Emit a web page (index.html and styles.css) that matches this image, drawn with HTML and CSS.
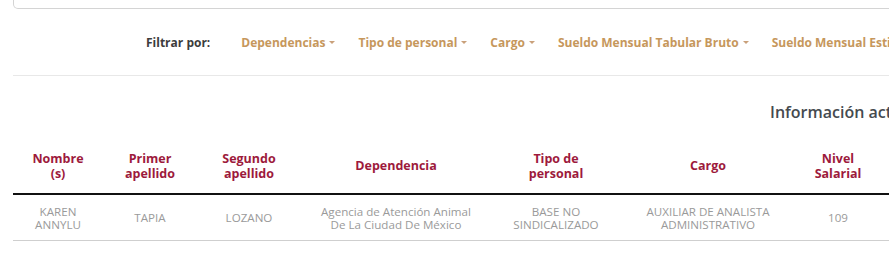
FILE: index.html
```html
<!DOCTYPE html>
<html lang="es">
<head>
<meta charset="utf-8">
<link rel="stylesheet" href="styles.css">
</head>
<body>
<div class="page">
  <div class="topbox"></div>
  <div class="filters">
    <span class="filter-label">Filtrar por:</span>
    <span class="filter">Dependencias<i class="caret"></i></span>
    <span class="filter">Tipo de personal<i class="caret"></i></span>
    <span class="filter">Cargo<i class="caret"></i></span>
    <span class="filter">Sueldo Mensual Tabular Bruto<i class="caret"></i></span>
    <span class="filter">Sueldo Mensual Estimado Neto<i class="caret"></i></span>
  </div>
  <div class="rule"></div>
  <h2 class="info">Información actualizada al 31 de marzo de 2024</h2>
  <table class="data">
    <colgroup>
      <col class="c1"><col class="c2"><col class="c3"><col class="c4"><col class="c5"><col class="c6"><col class="c7"><col class="c8">
    </colgroup>
    <thead>
      <tr>
        <th>Nombre<br>(s)</th>
        <th>Primer<br>apellido</th>
        <th>Segundo<br>apellido</th>
        <th>Dependencia</th>
        <th>Tipo de<br>personal</th>
        <th>Cargo</th>
        <th>Nivel<br>Salarial</th>
        <th>Sueldo</th>
      </tr>
    </thead>
    <tbody>
      <tr>
        <td>KAREN<br>ANNYLU</td>
        <td>TAPIA</td>
        <td>LOZANO</td>
        <td>Agencia de Atención Animal<br>De La Ciudad De México</td>
        <td>BASE NO<br>SINDICALIZADO</td>
        <td>AUXILIAR DE ANALISTA<br>ADMINISTRATIVO</td>
        <td>109</td>
        <td>$</td>
      </tr>
    </tbody>
  </table>
</div>
</body>
</html>
```
FILE: styles.css
```css
html, body {
  margin: 0;
  padding: 0;
  overflow: hidden;
  background: #fff;
}
body {
  font-family: "Open Sans", "Liberation Sans", sans-serif;
}
.page {
  width: 1300px;
}
.topbox {
  margin-left: 13px;
  height: 8px;
  border: 1px solid #d4d4d4;
  border-top: none;
  border-radius: 0 0 0 5px;
}
.filters {
  height: 66px;
  display: flex;
  align-items: center;
  gap: 23px;
  padding-left: 146px;
  font-size: 12px;
  font-weight: 700;
}
.filter-label {
  color: #3c3c3c;
  margin-right: 8px;
}
.filter {
  color: #c6975c;
  display: inline-flex;
  align-items: center;
  white-space: nowrap;
}
.caret {
  display: inline-block;
  width: 0;
  height: 0;
  margin-left: 4px;
  border-left: 3px solid transparent;
  border-right: 3px solid transparent;
  border-top: 3px solid #c9a07a;
}
.rule {
  margin-left: 13px;
  border-top: 1px solid #e8e8e8;
}
.info {
  margin: 26px 0 16px 770px;
  font-size: 16px;
  line-height: 20px;
  font-weight: 600;
  color: #454a4f;
  white-space: nowrap;
}
.data {
  margin-left: 13px;
  border-collapse: collapse;
  table-layout: fixed;
  width: 1000px;
}
.c1 { width: 90px; }
.c2 { width: 94px; }
.c3 { width: 104px; }
.c4 { width: 190px; }
.c5 { width: 130px; }
.c6 { width: 174px; }
.c7 { width: 86px; }
.c8 { width: 132px; }
.data th {
  height: 55px;
  padding: 0 4px;
  font-size: 12.5px;
  line-height: 15px;
  font-weight: 700;
  color: #9d1a3c;
  text-align: center;
  vertical-align: middle;
  border-bottom: 2px solid #111;
}
.data td {
  height: 45px;
  padding: 0 2px;
  font-size: 11.6px;
  line-height: 13px;
  color: #9a9a9a;
  text-align: center;
  vertical-align: middle;
  border-bottom: 1px solid #cfcfcf;
}
```
